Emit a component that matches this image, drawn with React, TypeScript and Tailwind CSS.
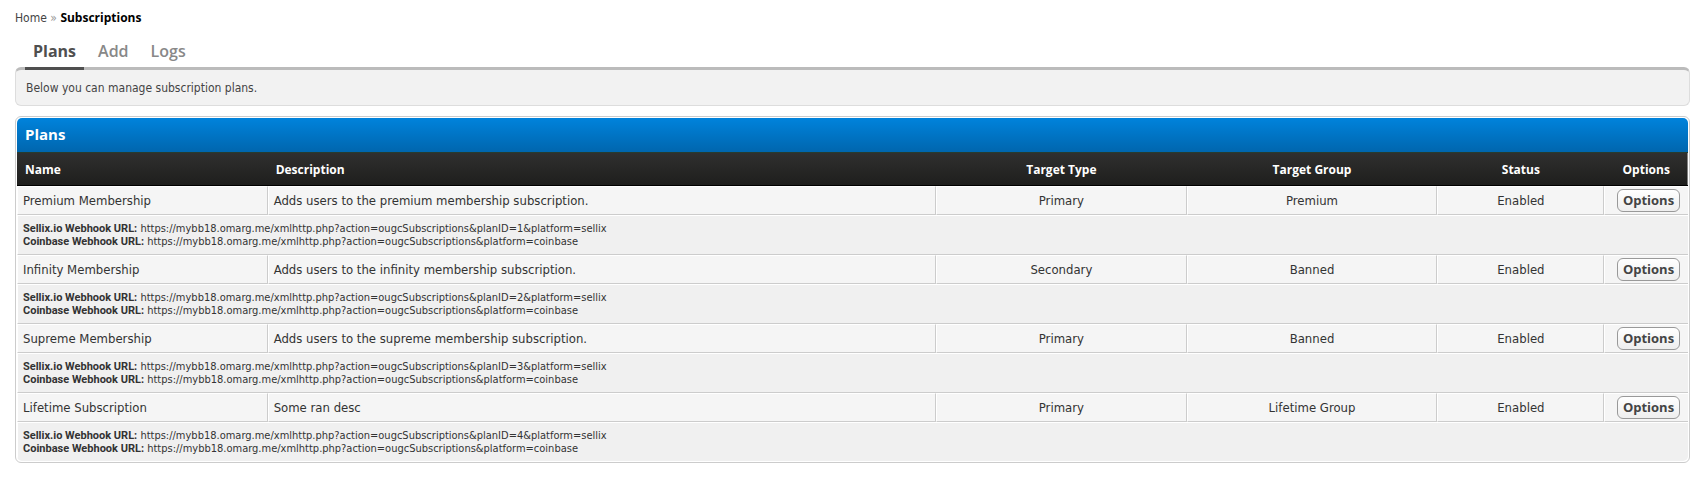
interface Plan {
  id: number;
  name: string;
  description: string;
  targetType: string;
  targetGroup: string;
  status: string;
}

const WEBHOOK_URL = "https://mybb18.omarg.me/xmlhttp.php?action=ougcSubscriptions";

const plans: Plan[] = [
  {
    id: 1,
    name: "Premium Membership",
    description: "Adds users to the premium membership subscription.",
    targetType: "Primary",
    targetGroup: "Premium",
    status: "Enabled",
  },
  {
    id: 2,
    name: "Infinity Membership",
    description: "Adds users to the infinity membership subscription.",
    targetType: "Secondary",
    targetGroup: "Banned",
    status: "Enabled",
  },
  {
    id: 3,
    name: "Supreme Membership",
    description: "Adds users to the supreme membership subscription.",
    targetType: "Primary",
    targetGroup: "Banned",
    status: "Enabled",
  },
  {
    id: 4,
    name: "Lifetime Subscription",
    description: "Some ran desc",
    targetType: "Primary",
    targetGroup: "Lifetime Group",
    status: "Enabled",
  },
];

const columns = [
  { label: "Name", className: "w-[15%] text-left" },
  { label: "Description", className: "w-[40%] text-left" },
  { label: "Target Type", className: "w-[15%] text-center" },
  { label: "Target Group", className: "w-[15%] text-center" },
  { label: "Status", className: "w-[10%] text-center" },
  { label: "Options", className: "w-[5%] text-center" },
];

const cell =
  "h-[29px] border border-t-white border-r-[#ccc] border-b-[#ccc] border-l-white bg-[#f5f5f5] px-[5px] pt-px text-[13px] leading-4";

function Breadcrumb() {
  return (
    <nav className="text-[12px] leading-4 text-[#444]">
      <a href="#home">Home</a> <span className="text-[#999]">»</span>{" "}
      <strong className="font-['Open_Sans',sans-serif] text-black">
        Subscriptions
      </strong>
    </nav>
  );
}

function Tabs() {
  return (
    <ul className="relative -mb-[3px] ml-[10px] flex font-['Open_Sans',sans-serif] text-[16px] leading-8 font-semibold text-[#888]">
      <li className="h-[35px] border-b-[3px] border-[#4f4f4f] px-2 font-bold text-[#4f4f4f]">
        <a href="#plans">Plans</a>
      </li>
      <li className="px-3.5">
        <a href="#add">Add</a>
      </li>
      <li className="px-2">
        <a href="#logs">Logs</a>
      </li>
    </ul>
  );
}

function PlanRows({ plan, last }: { plan: Plan; last: boolean }) {
  return (
    <>
      <tr>
        <td className={cell}>{plan.name}</td>
        <td className={cell}>{plan.description}</td>
        <td className={`${cell} text-center`}>{plan.targetType}</td>
        <td className={`${cell} text-center`}>{plan.targetGroup}</td>
        <td className={`${cell} text-center`}>{plan.status}</td>
        <td className="h-[29px] border-t border-b border-l border-white border-b-[#ccc] bg-[#f5f5f5] pr-2 pb-px">
          <button
            type="button"
            className="ml-auto block h-[23px] w-[63px] rounded-[6px] border border-[#999] bg-linear-to-b from-white to-[#eee] font-['Open_Sans',sans-serif] text-[13px] leading-4 font-bold text-[#444]"
          >
            Options
          </button>
        </td>
      </tr>
      <tr>
        <td
          colSpan={6}
          className={`border-t border-l border-white bg-[#f0f0f0] px-[5px] pb-px text-[11px] leading-[13px] ${
            last ? "h-[39px]" : "h-10 border-b border-b-[#ccc]"
          }`}
        >
          <strong className="font-['Roboto',sans-serif]">
            Sellix.io Webhook URL:
          </strong>{" "}
          {WEBHOOK_URL}&planID={plan.id}&platform=sellix
          <br />
          <strong className="font-['Roboto',sans-serif]">
            Coinbase Webhook URL:
          </strong>{" "}
          {WEBHOOK_URL}&platform=coinbase
        </td>
      </tr>
    </>
  );
}

export default function App() {
  return (
    <div className="bg-white px-[15px] pt-[10px] pb-6 font-['DejaVu_Sans_Condensed','DejaVu_Sans',sans-serif] text-[#333]">
      <Breadcrumb />
      <div className="mt-[9px]">
        <Tabs />
        <p className="rounded-[6px] border border-t-[3px] border-[#ddd] border-t-[#bbb] bg-[#f2f2f2] px-[10px] pt-[10px] pb-2 text-[12px] leading-[17px] text-[#444]">
          Below you can manage subscription plans.
        </p>
      </div>

      <div className="mt-[10px] rounded-[6px] border border-[#ccc] p-px">
        <div className="overflow-hidden rounded-[5px]">
          <h2 className="h-[34px] bg-linear-to-b from-[#0083dc] to-[#0066ae] px-2 font-['Open_Sans',sans-serif] text-[15px] leading-8 font-bold text-white">
            Plans
          </h2>
          <table className="w-full table-fixed border-separate border-spacing-0">
            <thead>
              <tr className="bg-linear-to-b from-[#303030] to-[#1e1e1c]">
                {columns.map((column) => (
                  <th
                    key={column.label}
                    className={`h-[34px] border-t border-b border-t-[#263c30] border-b-black px-2 pt-px font-['Open_Sans',sans-serif] text-[12px] leading-4 font-bold text-white ${column.className}`}
                  >
                    {column.label}
                  </th>
                ))}
              </tr>
            </thead>
            <tbody>
              {plans.map((plan, index) => (
                <PlanRows
                  key={plan.id}
                  plan={plan}
                  last={index === plans.length - 1}
                />
              ))}
            </tbody>
          </table>
        </div>
      </div>
    </div>
  );
}
